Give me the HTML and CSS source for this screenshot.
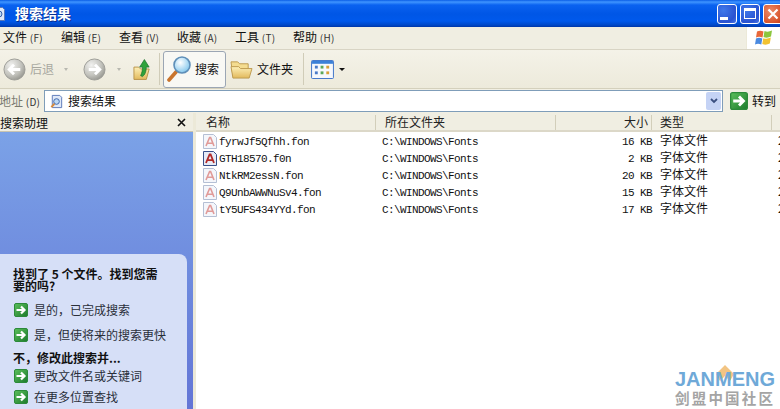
FILE: index.html
```html
<!DOCTYPE html>
<html lang="zh">
<head>
<meta charset="utf-8">
<title>搜索结果</title>
<link rel="stylesheet" href="styles.css">
</head>
<body>
<svg class="defs" width="0" height="0">
  <defs>
    <linearGradient id="gogreen" x1="0" y1="0" x2="1" y2="1"><stop offset="0" stop-color="#5cc05c"/><stop offset="1" stop-color="#1c7a2c"/></linearGradient>
    <radialGradient id="ball" cx=".35" cy=".3" r=".8"><stop offset="0" stop-color="#f2f2f0"/><stop offset=".6" stop-color="#c2c2bc"/><stop offset="1" stop-color="#8f8f88"/></radialGradient>
    <linearGradient id="fold" x1="0" y1="0" x2="0" y2="1"><stop offset="0" stop-color="#fdf0b8"/><stop offset="1" stop-color="#e2b95c"/></linearGradient>
    <radialGradient id="lens" cx=".4" cy=".35" r=".7"><stop offset="0" stop-color="#ffffff"/><stop offset="1" stop-color="#7cc4ec"/></radialGradient>
    <symbol id="go" viewBox="0 0 14 14">
      <rect x=".5" y=".5" width="13" height="13" rx="1.5" fill="url(#gogreen)" stroke="#2c8a3a"/>
      <path d="M2.5 7h7M7 3.5 10.5 7 7 10.5" fill="none" stroke="#fff" stroke-width="2.2"/>
    </symbol>
    <symbol id="font" viewBox="0 0 14 15">
      <path d="M.5.5h10l3 3v11H.5z" fill="#f4f6fb" stroke="#b4bfd4"/>
      <path d="M3 12 6.6 3.5h1L11 12M4.5 9.2h5" fill="none" stroke="#e09a98" stroke-width="1.6"/>
    </symbol>
    <symbol id="fontdark" viewBox="0 0 14 15">
      <path d="M.5.5h10l3 3v11H.5z" fill="#e6ebf6" stroke="#39518a"/>
      <path d="M3 12 6.6 3.5h1L11 12M4.5 9.2h5" fill="none" stroke="#b02a28" stroke-width="1.8"/>
    </symbol>
    <symbol id="page" viewBox="0 0 16 16">
      <path d="M3.5 1.5h8l2 2v11h-10z" fill="#dfe8f8" stroke="#5a78b8"/>
      <circle cx="8" cy="8" r="3" fill="#bcd8f4" stroke="#3a62a8"/>
      <path d="M5.8 10.4 2.5 14" stroke="#d98a3a" stroke-width="2"/>
    </symbol>
  </defs>
</svg>

<div class="window">
  <header class="titlebar">
    <svg class="title-icon" viewBox="0 0 16 16"><use href="#page"/></svg>
    <span class="title-text">搜索结果</span>
    <div class="winbtns">
      <span class="winbtn"><i class="glyph-min"></i></span>
      <span class="winbtn"><i class="glyph-max"></i></span>
      <span class="winbtn winbtn-close">
        <svg viewBox="0 0 12 12" width="12" height="12"><path d="M1.5 1.5l9 9M10.5 1.5l-9 9" stroke="#fff" stroke-width="2.2"/></svg>
      </span>
    </div>
  </header>

  <nav class="menubar">
    <span class="menu">文件 <span class="key">(F)</span></span>
    <span class="menu">编辑 <span class="key">(E)</span></span>
    <span class="menu">查看 <span class="key">(V)</span></span>
    <span class="menu">收藏 <span class="key">(A)</span></span>
    <span class="menu">工具 <span class="key">(T)</span></span>
    <span class="menu">帮助 <span class="key">(H)</span></span>
    <div class="flagbox">
      <svg viewBox="0 0 20 20" width="20" height="20">
        <path d="M3 3.5 Q6 2 9.5 3.5 L8.5 9.5 Q5 8 2 9.5z" fill="#e8683a"/>
        <path d="M10.5 3 Q14 4.5 18 2.5 L17 8.5 Q13 10.5 9.5 9z" fill="#8cc63e"/>
        <path d="M2 10.5 Q5 9 8.3 10.5 L7.3 16.5 Q4 15 1 16.5z" fill="#4a8ae0"/>
        <path d="M9.3 10.2 Q13 11.5 16.8 9.6 L15.8 15.6 Q12 17.5 8.3 16z" fill="#f2c230"/>
      </svg>
    </div>
  </nav>

  <div class="toolbar">
    <svg class="ball" viewBox="0 0 24 24"><circle cx="12" cy="12" r="11" fill="url(#ball)" stroke="#9c9c96"/><path d="M18 12H7M11.5 7 6.5 12l5 5" fill="none" stroke="#fff" stroke-width="3"/></svg>
    <span class="tb-label tb-disabled">后退</span>
    <span class="tb-caret"></span>
    <svg class="ball ball-fwd" viewBox="0 0 24 24"><circle cx="12" cy="12" r="11" fill="url(#ball)" stroke="#9c9c96"/><path d="M6 12h11M12.5 7l5 5-5 5" fill="none" stroke="#fff" stroke-width="3"/></svg>
    <span class="tb-caret tb-caret-fwd"></span>
    <svg class="up" viewBox="0 0 20 24">
      <path d="M1 10h5l2 2h9l-3 11H1z" fill="url(#fold)" stroke="#b8924a"/>
      <path d="M10 20c3-2 4-6 4-10h3l-5-8-5 8h3c0 3-.5 6-2 9z" fill="#2fa23a" stroke="#16702a" stroke-width=".7"/>
    </svg>
    <span class="tb-sep tb-sep-a"></span>
    <div class="tb-search">
      <svg class="lens" viewBox="0 0 24 28">
        <path d="M9 17 2 25" stroke="#c9752e" stroke-width="3.6" stroke-linecap="round"/>
        <circle cx="15" cy="10" r="8" fill="url(#lens)" stroke="#5f8fb8" stroke-width="1.6"/>
      </svg>
      <span class="tb-label">搜索</span>
    </div>
    <svg class="folder" viewBox="0 0 24 22">
      <path d="M1 3h7l2 2h9v13H3z" fill="#f4dc90" stroke="#bd9a50"/>
      <path d="M3 20 1 8h8l2 2h12l-3 10z" fill="url(#fold)" stroke="#bd9a50"/>
    </svg>
    <span class="tb-label tb-folders">文件夹</span>
    <span class="tb-sep tb-sep-b"></span>
    <svg class="views" viewBox="0 0 24 20">
      <rect x=".5" y=".5" width="23" height="19" rx="1" fill="#f6f8fc" stroke="#3a70c8"/>
      <rect x="1" y="1" width="22" height="3" fill="#3a80d8"/>
      <g fill="#4a7ac8"><rect x="4" y="6" width="3" height="3"/><rect x="4" y="12" width="3" height="3"/></g>
      <g fill="#5aa858"><rect x="10" y="6" width="3" height="3"/><rect x="10" y="12" width="3" height="3"/></g>
      <g fill="#d8a038"><rect x="16" y="6" width="3" height="3"/><rect x="16" y="12" width="3" height="3"/></g>
    </svg>
    <span class="tb-drop"></span>
  </div>

  <div class="addressbar">
    <span class="addr-label">地址 <span class="key">(D)</span></span>
    <div class="addr-input">
      <svg class="addr-icon" viewBox="0 0 16 16"><use href="#page"/></svg>
      <span class="addr-text">搜索结果</span>
      <span class="addr-drop">
        <svg viewBox="0 0 8 6" width="8" height="6"><path d="M1 1l3 3 3-3" fill="none" stroke="#3a4f80" stroke-width="1.8"/></svg>
      </span>
    </div>
    <svg class="addr-go" viewBox="0 0 14 14"><use href="#go"/></svg>
    <span class="addr-gotext">转到</span>
  </div>

  <div class="main">
    <aside class="sidebar">
      <div class="side-head">
        <span>搜索助理</span>
        <svg viewBox="0 0 9 9" width="9" height="9"><path d="M1 1l7 7M8 1 1 8" stroke="#111" stroke-width="1.6"/></svg>
      </div>
      <div class="side-body">
        <div class="taskbox">
          <p class="task-title">找到了 5 个文件。找到您需要的吗?</p>
          <a class="task-link task-link-a"><svg class="task-go"><use href="#go"/></svg>是的，已完成搜索</a>
          <a class="task-link task-link-b"><svg class="task-go"><use href="#go"/></svg>是，但使将来的搜索更快</a>
          <p class="task-sub">不，修改此搜索并...</p>
          <a class="task-link task-link-c"><svg class="task-go"><use href="#go"/></svg>更改文件名或关键词</a>
          <a class="task-link task-link-d"><svg class="task-go"><use href="#go"/></svg>在更多位置查找</a>
        </div>
      </div>
    </aside>
    <div class="splitter"></div>
    <section class="results">
      <div class="row head">
        <span class="c-name">名称</span>
        <span class="c-path">所在文件夹</span>
        <span class="c-size">大小</span>
        <span class="c-type">类型</span>
        <span class="c-more"></span>
      </div>
      <div class="rows">
        <div class="row item"><span class="c-name"><svg class="ficon"><use href="#font"/></svg><span class="mono">fyrwJf5Qfhh.fon</span></span><span class="c-path mono">C:\WINDOWS\Fonts</span><span class="c-size"><span class="mono">16 KB</span></span><span class="c-type">字体文件</span><span class="c-more">2</span></div>
        <div class="row item"><span class="c-name"><svg class="ficon"><use href="#fontdark"/></svg><span class="mono">GTH18570.f0n</span></span><span class="c-path mono">C:\WINDOWS\Fonts</span><span class="c-size"><span class="mono">2 KB</span></span><span class="c-type">字体文件</span><span class="c-more">2</span></div>
        <div class="row item"><span class="c-name"><svg class="ficon"><use href="#font"/></svg><span class="mono">NtkRM2essN.fon</span></span><span class="c-path mono">C:\WINDOWS\Fonts</span><span class="c-size"><span class="mono">20 KB</span></span><span class="c-type">字体文件</span><span class="c-more">2</span></div>
        <div class="row item"><span class="c-name"><svg class="ficon"><use href="#font"/></svg><span class="mono">Q9UnbAWWNuSv4.fon</span></span><span class="c-path mono">C:\WINDOWS\Fonts</span><span class="c-size"><span class="mono">15 KB</span></span><span class="c-type">字体文件</span><span class="c-more">2</span></div>
        <div class="row item"><span class="c-name"><svg class="ficon"><use href="#font"/></svg><span class="mono">tY5UFS434YYd.fon</span></span><span class="c-path mono">C:\WINDOWS\Fonts</span><span class="c-size"><span class="mono">17 KB</span></span><span class="c-type">字体文件</span><span class="c-more">2</span></div>
      </div>
    </section>
  </div>

  <div class="watermark">
    <svg class="wm-diamond" viewBox="0 0 18 16"><path d="M9 0 18 9l-4 7-5-5-5 5-4-7z" fill="#f2c483"/></svg>
    <div class="wm-en">JANMENG</div>
    <div class="wm-cn">剑盟中国社区</div>
  </div>
</div>
</body>
</html>
```
FILE: styles.css
```css
* { box-sizing: border-box; }
html, body { margin: 0; padding: 0; height: 100%; overflow: hidden; background: #fff; }
body { font: 12px/14px "Noto Sans CJK SC", "Liberation Sans", sans-serif; color: #111; }
.defs { position: absolute; }
.window { position: relative; width: 780px; height: 409px; display: flex; flex-direction: column; overflow: hidden; }

.titlebar {
  height: 27px; flex: none; display: flex; align-items: center;
  background: linear-gradient(#0a5ee6 0, #3f95ff 2px, #0a62f0 5px, #0056e6 14px, #0059ec 21px, #0048c8 25px, #0036a8 27px);
}
.title-icon { width: 16px; height: 16px; margin-left: -9px; flex: none; }
.title-text { margin-left: 8px; font-size: 14px; line-height: 14px; margin-top: -2px; font-weight: 700; color: #fff; text-shadow: 1px 1px 0 #0a2f90; }
.winbtns { margin-left: auto; display: flex; gap: 3px; margin-right: -3px; }
.winbtn {
  width: 20px; height: 20px; border: 1px solid #fff; border-radius: 3px;
  background: radial-gradient(circle at 30% 30%, #3f78ea, #2a52d0 70%, #4a78e8);
  position: relative; display: flex; align-items: center; justify-content: center;
}
.winbtn-close { background: radial-gradient(circle at 35% 35%, #ec8a68, #d8542c 70%, #c03a18); }
.glyph-min { width: 8px; height: 3px; background: #fff; align-self: flex-end; margin: 0 6px 3px 0; }
.glyph-max { width: 12px; height: 11px; border: 1px solid #fff; border-top-width: 3px; }

.menubar {
  height: 23px; flex: none; display: flex; align-items: center;
  background: #f0eee2; border-bottom: 1px solid #d8d4c4; padding: 0 0 2px 3px;
}
.menu { width: 58px; flex: none; white-space: nowrap; }
.key { font-size: 10px; letter-spacing: .3px; color: #333; }
.flagbox {
  margin-left: auto; width: 34px; height: 22px; margin-bottom: -2px; background: #fff;
  display: flex; align-items: center; justify-content: center;
  border-left: 1px solid #ece9d8;
}

.toolbar {
  height: 39px; flex: none; display: flex; align-items: center; padding-left: 3px;
  background: linear-gradient(#f4f2e8, #edeadb);
  border-bottom: 1px solid #d4d0bc;
}
.ball { width: 23px; height: 23px; flex: none; }
.tb-label { margin-left: 4px; white-space: nowrap; }
.tb-disabled { color: #a8a8a0; margin-left: 4px; }
.tb-caret { width: 0; height: 0; margin-left: 10px; border: 2.5px solid transparent; border-top: 3px solid #b8b8b0; margin-top: 3px; flex: none; }
.ball-fwd { margin-left: 15px; }
.tb-caret-fwd { margin-left: 11px; }
.up { width: 19px; height: 24px; margin-left: 12px; flex: none; }
.tb-sep { width: 1px; height: 32px; background: #d0ccb8; flex: none; }
.tb-sep-a { margin-left: 7px; }
.tb-search {
  margin-left: 3px; width: 63px; height: 37px; flex: none; display: flex; align-items: center;
  padding-left: 3px; border: 1px solid #9ba6b4; border-radius: 3px; background: #f8f8f4;
}
.lens { width: 24px; height: 28px; flex: none; }
.tb-search .tb-label { margin-left: 4px; }
.folder { width: 23px; height: 21px; margin-left: 4px; flex: none; }
.tb-folders { margin-left: 4px; }
.tb-sep-b { margin-left: 10px; }
.views { width: 23px; height: 19px; margin-left: 7px; flex: none; }
.tb-drop { width: 0; height: 0; margin-left: 5px; border: 3px solid transparent; border-top: 3px solid #111; margin-top: 3px; flex: none; }

.addressbar {
  height: 24px; flex: none; display: flex; align-items: center;
  background: #f1efe3;
}
.addr-label { width: 45px; flex: none; color: #7a7a70; white-space: nowrap; margin-left: -1px; }
.addr-input {
  width: 679px; height: 22px; flex: none; display: flex; align-items: center; padding: 0 1px 0 4px;
  background: #fff; border: 1px solid #7f9db9;
}
.addr-icon { width: 15px; height: 15px; flex: none; }
.addr-text { margin-left: 4px; }
.addr-drop {
  margin-left: auto; width: 15px; height: 18px; display: flex; align-items: center; justify-content: center;
  background: #c5d3f5; border-radius: 2px;
}
.addr-go { width: 18px; height: 18px; margin-left: 7px; flex: none; }
.addr-gotext { margin-left: 4px; white-space: nowrap; }

.main { flex: 1; display: flex; min-height: 0; }
.sidebar { width: 193px; flex: none; display: flex; flex-direction: column; }
.side-head {
  height: 19px; flex: none; display: flex; align-items: center; justify-content: space-between;
  padding: 1px 7px 0 0; background: #f0eee2; border-bottom: 1px solid #c8c4b0;
}
.side-body {
  flex: 1; display: flex; flex-direction: column; justify-content: flex-end; padding-right: 6px;
  background: linear-gradient(#7ba2e7, #6375d6);
}
.taskbox {
  height: 155px; background: #d6dff7; border-top-right-radius: 8px; padding: 14px 19px 0 13px;
}
.task-title { margin: 0; font-weight: 700; line-height: 12px; color: #111; }
.task-sub { margin: 9px 0 0; font-weight: 700; color: #111; line-height: 14px; }
.task-link { display: flex; align-items: center; gap: 6px; height: 14px; white-space: nowrap; color: #2a2f3a; }
.task-go { width: 14px; height: 14px; flex: none; margin-left: 1px; }
.task-link-a { margin-top: 11px; }
.task-link-b { margin-top: 11px; }
.task-link-c { margin-top: 4px; }
.task-link-d { margin-top: 7px; }

.splitter { width: 3px; flex: none; background: #ece9d8; }
.results { flex: 1; min-width: 0; display: flex; flex-direction: column; background: #fff; }
.row { display: flex; align-items: center; white-space: nowrap; }
.head { height: 19px; flex: none; padding-top: 1px; background: #f0eee2; border-bottom: 2px solid #dcd8c8; color: #222; }
.head .c-name, .head .c-path, .head .c-size, .head .c-type { box-shadow: inset -1px 0 0 #d2ceba; height: 15px; display: flex; align-items: center; }
.head .c-name { padding-left: 10px; }
.head .c-path { padding-left: 9px; }
.rows { padding-top: 1px; }
.item { height: 17px; color: #111; }
.item .c-type, .item .c-more { margin-top: -3px; }
.c-name { width: 180px; flex: none; display: flex; align-items: center; padding-left: 7px; }
.c-path { width: 180px; flex: none; padding-left: 6px; }
.c-size { width: 96px; flex: none; display: flex; justify-content: flex-end; }
.head .c-size { padding-right: 4px; }
.c-type { width: 120px; flex: none; padding-left: 8px; }
.c-more { flex: 1; padding-left: 6px; overflow: hidden; }
.ficon { width: 14px; height: 15px; flex: none; margin-right: 2px; }
.mono { font-family: "Liberation Mono", "DejaVu Sans Mono", monospace; font-size: 11px; letter-spacing: -.6px; }

.watermark { position: absolute; left: 675px; top: 368px; width: 104px; }
.wm-diamond { position: absolute; left: 41px; top: -3px; width: 18px; height: 16px; }
.wm-en { margin-top: 3px; font: 700 20px/17px "Liberation Sans", sans-serif; color: #6fa9d8; position: relative; }
.wm-cn { font: 700 14.5px/15px "Noto Sans CJK SC", sans-serif; letter-spacing: 2.2px; color: #a4a4a4; white-space: nowrap; margin-top: 2px; }
```
